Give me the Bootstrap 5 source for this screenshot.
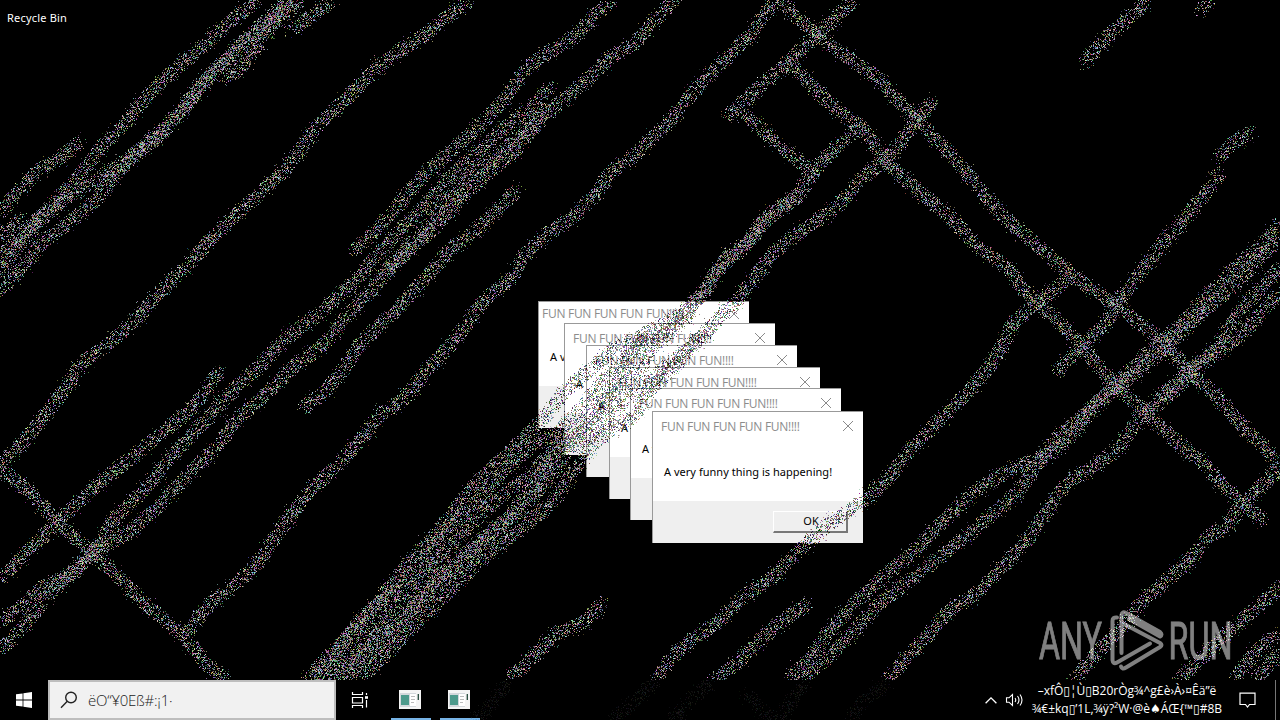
<!DOCTYPE html>
<html lang="en">
<head>
    <meta charset="UTF-8">
    <meta name="viewport" content="width=device-width, initial-scale=1.0">
    <title>Desktop</title>
    <link rel="stylesheet" href="https://cdn.jsdelivr.net/npm/bootstrap@5.3.0/dist/css/bootstrap.min.css">
    <style>
        html, body {
            height: 100%;
            margin: 0;
            overflow: hidden;
            background: #000;
        }
        body {
            font-family: "Open Sans", "Noto Sans", "DejaVu Sans", sans-serif;
            font-size: 12px;
            line-height: 16px;
        }
        .desktop {
            width: 1280px;
            height: 720px;
        }
        .bin-label {
            padding: 10px 7px;
            font-family: "Noto Sans", sans-serif;
            font-size: 11px;
            letter-spacing: 0.2px;
        }

        /* Message boxes */
        .msg-window {
            position: absolute;
            width: 211px;
            height: 132px;
            background: #fff;
            border: 1px solid #999;
            border-right: 0;
            border-bottom: 0;
            color: #000;
        }
        .w1 { left: 538px; top: 301px; height: 127px; }
        .w2 { left: 564px; top: 323px; }
        .w3 { left: 586px; top: 345px; }
        .w4 { left: 609px; top: 367px; }
        .w5 { left: 630px; top: 388px; }
        .w6 { left: 652px; top: 411px; }
        .msg-title {
            height: 29px;
            padding: 0 10px 0 8px;
            color: #8c8c8c;
        }
        .msg-title span { letter-spacing: -0.28px; }
        .msg-title svg { margin-bottom: 1px; }
        .w1 .msg-title { height: 24px; padding-left: 3px; }
        .msg-body {
            height: 60px;
            padding: 23px 0 0 11px;
            font-family: "Noto Sans", sans-serif;
            font-size: 11px;
            white-space: nowrap;
            overflow: hidden;
        }
        .msg-text { letter-spacing: 0.03px; }
        .msg-footer {
            background: #efefef;
            padding: 10px 15px 0 0;
        }
        .ok-btn {
            width: 75px;
            height: 22px;
            background: #efefef;
            border: 1px solid #fff;
            border-right: 2px solid #777;
            border-bottom: 2px solid #777;
            border-radius: 0;
            color: #000;
            padding: 0 0 2px 2px;
            font-family: "Noto Sans", sans-serif;
            font-size: 11px;
            line-height: 17px;
        }

        /* Overlays */
        .noise-layer {
            position: absolute;
            left: 0;
            top: 0;
            mix-blend-mode: difference;
            pointer-events: none;
        }
        .brand-mark {
            position: absolute;
            left: 1036px;
            top: 606px;
        }

        /* Taskbar */
        .task-bar {
            height: 40px;
        }
        .start-btn { width: 48px; }
        .search-box {
            width: 288px;
            background: #f1f1f1;
            border: 2px solid #bdbdbd;
            color: #222;
            font-size: 15px;
            padding-left: 10px;
        }
        .search-box span {
            font-weight: 300;
            letter-spacing: -0.25px;
            margin-left: 10px;
        }
        .task-view { width: 48px; }
        .task-app {
            width: 40px;
            margin-left: 7px;
            margin-right: 2px;
            padding-right: 2px;
            border-bottom: 2px solid #76b3e6;
        }
        .tray-clock {
            width: 200px;
            margin-left: 2px;
            line-height: 18px;
            white-space: nowrap;
            text-align: center;
        }
        .notify-icon {
            margin-left: 12px;
            margin-right: 19px;
        }
        .show-desktop {
            width: 5px;
            border-left: 1px solid #777;
        }
    </style>
</head>
<body>
    <div class="desktop position-relative d-flex flex-column overflow-hidden">
        <div class="flex-grow-1">
            <div class="bin-label text-white">Recycle Bin</div>
        </div>

        <div id="windows"></div>

        <!-- Taskbar -->
        <div class="task-bar d-flex text-white">
            <div class="start-btn d-flex align-items-center justify-content-center">
                <svg width="16" height="16" viewBox="0 0 16 16" fill="#fff">
                    <path d="M0 2.3 6.6 1.4V7.6H0ZM7.4 1.3 16 0V7.6H7.4ZM0 8.4H6.6V14.6L0 13.7ZM7.4 8.4H16V16L7.4 14.7Z"/>
                </svg>
            </div>
            <div class="search-box d-flex align-items-center">
                <svg width="18" height="18" viewBox="0 0 18 18" fill="none" stroke="#222" stroke-width="1.4">
                    <circle cx="11" cy="6.5" r="5.3"/>
                    <path d="M7.3 10.3 1 16.8"/>
                </svg>
                <span>ëO“¥0Eß#:¡1·</span>
            </div>
            <div class="task-view d-flex align-items-center justify-content-center">
                <svg width="18" height="16" viewBox="0 0 18 16" fill="none" stroke="#fff" stroke-width="1.2">
                    <path d="M1.5 0V2.5H11.5V0M1.5 5.5H11.5V11H1.5ZM1.5 16V13.5H11.5V16M15.5 1V3M15.5 8V15.5"/>
                    <path d="M14 5.5H17" stroke-width="2.6"/>
                </svg>
            </div>
            <div class="task-app d-flex align-items-center justify-content-center">
                <svg width="22" height="19" viewBox="0 0 22 19">
                    <path fill="#f4f4f4" d="M0 0H22V19H0Z"/>
                    <path fill="#d3d8dc" d="M1 3H17V17H1Z"/>
                    <path fill="#4d9a8c" d="M2 5H10V15H2Z"/>
                    <path fill="#fff" d="M11 4H17V16H11Z"/>
                    <path stroke="#bbb" d="M12 6.500H16M12 9.500H16M12 12.500H15"/>
                    <path stroke="#24483c" stroke-width="1.300" d="M19.300 4V10"/>
                </svg>
            </div>
            <div class="task-app d-flex align-items-center justify-content-center">
                <svg width="22" height="19" viewBox="0 0 22 19">
                    <path fill="#f4f4f4" d="M0 0H22V19H0Z"/>
                    <path fill="#d3d8dc" d="M1 3H17V17H1Z"/>
                    <path fill="#4d9a8c" d="M2 5H10V15H2Z"/>
                    <path fill="#fff" d="M11 4H17V16H11Z"/>
                    <path stroke="#bbb" d="M12 6.500H16M12 9.500H16M12 12.500H15"/>
                    <path stroke="#24483c" stroke-width="1.300" d="M19.300 4V10"/>
                </svg>
            </div>
            <div class="d-flex align-items-center ms-auto">
                <svg width="12" height="7" viewBox="0 0 12 7" fill="none" stroke="#fff" stroke-width="1.3">
                    <path d="M.6 6.300 6 .9 11.400 6.300"/>
                </svg>
                <svg class="ms-2" width="20" height="14" viewBox="0 0 20 14" fill="none" stroke="#fff" stroke-width="1.1">
                    <path d="M1.500 4.800H4L7.500 1.500V12.500L4 9.200H1.500ZM10 5Q11.500 7 10 9M12.500 3Q15.500 7 12.500 11M15 1.500Q19 7 15 12.500"/>
                </svg>
                <div class="tray-clock">
                    <div>–xfÔ▯¦Ù▯B20rÒg¾^g£è›À›¤Êä”ë</div>
                    <div>¾€±kq▯’1L,¾ÿ?²W·@è♠ÁŒ{™▯#8B</div>
                </div>
                <svg class="notify-icon" width="17" height="17" viewBox="0 0 17 17" fill="none" stroke="#fff" stroke-width="1.2">
                    <path d="M1 1.100H16V12.500H10.500L8.500 15L6.500 12.500H1Z"/>
                </svg>
            </div>
            <div class="show-desktop"></div>
        </div>

        <canvas id="noise" class="noise-layer" width="1280" height="720"></canvas>

        <svg class="brand-mark" width="200" height="70" viewBox="1036 606 200 70" opacity=".5">
            <g fill="#fff" stroke="#fff" stroke-width=".9" font-family="Roboto, sans-serif" font-size="51.500">
                <text x="1039" y="659" textLength="63" lengthAdjust="spacingAndGlyphs">ANY</text>
                <text x="1168.500" y="659" textLength="64" lengthAdjust="spacingAndGlyphs">RUN</text>
            </g>
            <g fill="none" stroke="#fff" stroke-width="4" stroke-linecap="round" stroke-linejoin="round">
                <path d="M1117 617.500Q1112.500 617 1112.500 621V660Q1113 665 1117 662.500L1150 643.500"/>
                <path d="M1121.500 653V615Q1122 611 1126 613L1160 632Q1163 634.500 1160 636.500L1129 619"/>
                <path d="M1124 624 1160 643Q1163 645 1160 647L1126 667.500Q1122 670 1121 666.500"/>
            </g>
        </svg>
    </div>

    <script>
        // Stacked message boxes
        const windowsEl = document.getElementById("windows");
        for (let i = 1; i <= 6; i++) {
            windowsEl.innerHTML += `
                <div class="msg-window d-flex flex-column w${i}">
                    <div class="msg-title d-flex align-items-center justify-content-between">
                        <span>FUN FUN FUN FUN FUN!!!!</span>
                        <svg width="10" height="10" viewBox="0 0 10 10" stroke="#8a8a8a" stroke-width="1"><path d="M0 0 10 10M10 0 0 10"/></svg>
                    </div>
                    <div class="msg-body"><span class="msg-text">A very funny thing is happening!</span></div>
                    <div class="msg-footer flex-grow-1 d-flex justify-content-end align-items-start">
                        <button class="btn ok-btn">OK</button>
                    </div>
                </div>`;
        }

        // Spray trails: flat lists of x, y points
        const trails = [
            [257,0,230,22,205,45,180,65,152,90,130,118,105,143,88,165,65,192,45,212,20,238,0,258],
            [292,0,275,18,245,42,225,62,205,80,185,105,160,135,120,165,70,195,40,220,15,250,0,272],
            [285,0,262,25,240,45,215,70,195,95,172,122,140,150,115,175,98,198,75,218,45,240,25,265,0,290],
            [302,0,275,22,255,50,240,68,224,80],
            [330,2,310,18,290,30],
            [80,142,60,158,40,170,20,190,0,212],
            [22,218,0,238],
            [470,0,455,10,430,32,400,50,380,65,355,90,335,110,315,128,300,150,280,175,250,202,225,225,210,240,185,268,160,292,140,315,115,338,80,365,65,390,45,415,25,440,0,465],
            [0,468,30,492,60,525,95,555,130,588,160,617,185,637,205,663,225,680],
            [613,0,593,17,573,38,540,57,523,73,510,93,487,118,460,143,430,170,410,190,393,213,355,250],
            [675,0,653,22,637,42,610,58,587,80,563,100,543,117,530,132,513,153,483,177,457,203,430,233,413,248,390,267,370,293,343,320,330,337,317,350,293,367,267,393,233,423,220,443,193,470,167,497,147,517,127,533,93,553,67,577,43,587,0,623],
            [545,112,520,135,497,157,470,175,457,190,430,222,405,250,385,275],
            [550,87,537,103,510,123,483,147,450,177,430,200,400,230,367,267,350,287,320,313,287,337,263,363,233,390,213,413,187,440,167,460,147,487,113,520,97,547,83,563,50,593,20,630,0,650],
            [517,190,497,210,473,233,450,250,430,273,397,310,363,340,343,370,327,390,303,408],
            [775,0,757,27,733,53,710,73,687,100,663,127,637,153,610,173,597,193,573,217,543,237,523,257,510,280,487,297,455,340,430,367,403,400,383,412,363,437,340,463,310,490,290,517,273,540,260,560,237,583,203,610,187,633],
            [780,0,797,17,820,37,840,53,855,62,880,80,900,103,917,118,930,133,950,153,973,180,1000,213,1027,237,1057,263,1083,283,1113,303,1140,323,1160,340,1190,372,1220,400,1247,430,1267,450,1279,467],
            [853,2,830,23,813,37,790,60,763,83,740,107,727,115],
            [790,63,813,87,837,110,865,130,885,160,917,190,950,217,973,243,1007,267,1023,290,1037,303,1057,320,1083,347,1110,380,1143,410,1167,433,1203,463,1227,490,1243,503,1263,520],
            [742,112,773,140,797,160,813,173],
            [860,128,833,150,813,173,797,197,770,213,750,240,730,253,710,280,700,297,677,317,647,333,613,350,590,370,563,393,540,423,500,460,470,490,440,530,410,560,380,600,350,635,320,665,308,680],
            [797,197,765,220,742,250,722,265,705,290,673,327,640,345,627,360,617,387,597,413,570,433,547,457,525,480,495,500,465,530,447,550,420,580,390,610,360,645,325,680],
            [933,100,917,120,900,143,885,160,860,180,837,207,807,227,773,253,750,283,740,297,720,317,700,337,673,367,650,390,635,415,597,440,577,465,555,500,523,527,480,560,447,593,417,623,385,655,360,680],
            [710,330,687,350,663,370,630,395,603,427,570,447,550,477,527,505,490,535,460,565,430,590,400,625,370,655,345,680],
            [647,335,620,365,600,385,580,410,560,430,530,447,500,475,475,505,450,525,425,560,395,590,360,620,338,650,315,680],
            [690,315,655,345,635,375,605,400,585,430,555,450,535,485,505,520,475,545,440,575,410,610,375,640,340,675],
            [1070,277,1037,303,1013,323,1005,340,993,363,967,393,940,420,910,450,890,477,867,497,850,510,830,523,803,547,773,577,743,597,717,623,687,643,667,663,658,680],
            [603,603,583,623,557,633,530,660,508,680],
            [808,603,780,623,757,643,733,667,713,680],
            [1280,222,1260,247,1233,270,1210,293,1183,323,1157,345,1133,367,1107,393,1083,417,1057,437,1043,457,1010,470,973,493,947,517,913,553,883,577,853,605,833,627,813,653,788,680],
            [1280,240,1255,262,1235,285,1205,310,1180,335,1157,357,1123,383,1097,403,1067,440,1037,463,1017,493,983,523,953,547,920,573,883,600,850,635,825,660,802,680],
            [1280,267,1250,300,1227,330,1217,347,1190,370,1167,390,1143,413,1117,450,1093,467,1067,483,1047,510,1030,537,1000,570,977,593,950,610,923,640,887,680],
            [1280,293,1263,310,1245,332,1212,355,1185,380,1160,405],
            [1251,132,1233,143,1219,158],
            [1220,173,1203,197,1183,220,1160,247,1140,273,1117,303,1107,323,1080,347,1057,372],
            [1147,2,1127,20,1107,37,1085,63],
            [1210,2,1200,10],
            [1279,470,1260,487,1240,507,1230,523,1207,537,1190,560,1167,580,1140,603,1123,627,1097,653,1073,680],
            [1280,587,1250,613,1227,633,1203,657,1178,680],
            [1280,633,1257,650,1234,680],
            [1280,653,1255,680],
            [220,370,207,390,187,413,153,440,133,457,103,480,77,503,57,523,30,550,0,580]
        ];
        // Barely visible leftovers under the taskbar
        const ghosts = [
            [508,682,490,705,475,720], [655,682,630,705,612,720], [712,682,690,700,672,720],
            [745,694,765,712,775,720], [805,682,790,704,780,720], [888,682,860,705,850,720]
        ];

        // Seeded generator, so the spray is the same on every load
        let seed = 1234567;
        function rnd() {
            seed = (seed + 0x6D2B79F5) | 0;
            let t = Math.imul(seed ^ (seed >>> 15), 1 | seed);
            t = (t + Math.imul(t ^ (t >>> 7), 61 | t)) ^ t;
            return ((t ^ (t >>> 14)) >>> 0) / 4294967296;
        }

        const ctx = document.getElementById("noise").getContext("2d");
        function spray(points, perPixel, level, top, bottom) {
            for (let i = 0; i + 3 < points.length; i += 2) {
                const dx = points[i + 2] - points[i];
                const dy = points[i + 3] - points[i + 1];
                const count = Math.hypot(dx, dy) * perPixel;
                for (let n = 0; n < count; n++) {
                    const t = rnd();
                    const a = rnd() * Math.PI * 2;
                    const far = rnd() > 0.86;
                    const r = Math.sqrt(rnd()) * (far ? 11 : 7.5);
                    const x = Math.floor(points[i] + dx * t + Math.cos(a) * r);
                    const y = Math.floor(points[i + 1] + dy * t + Math.sin(a) * r);
                    if (y < top || y >= bottom) continue;
                    const base = 10 + rnd() * 110;
                    const c = [0, 0, 0].map(() => Math.round((base + rnd() * 135) * level * (far ? 0.7 : 1)));
                    ctx.fillStyle = `rgb(${c})`;
                    ctx.fillRect(x, y, 1, 1);
                }
            }
        }
        trails.forEach(p => spray(p, 5.8, 1, 0, 680));
        ghosts.forEach(p => spray(p, 4, 0.13, 680, 720));
    </script>
    <script src="https://cdn.jsdelivr.net/npm/bootstrap@5.3.0/dist/js/bootstrap.bundle.min.js"></script>
</body>
</html>
